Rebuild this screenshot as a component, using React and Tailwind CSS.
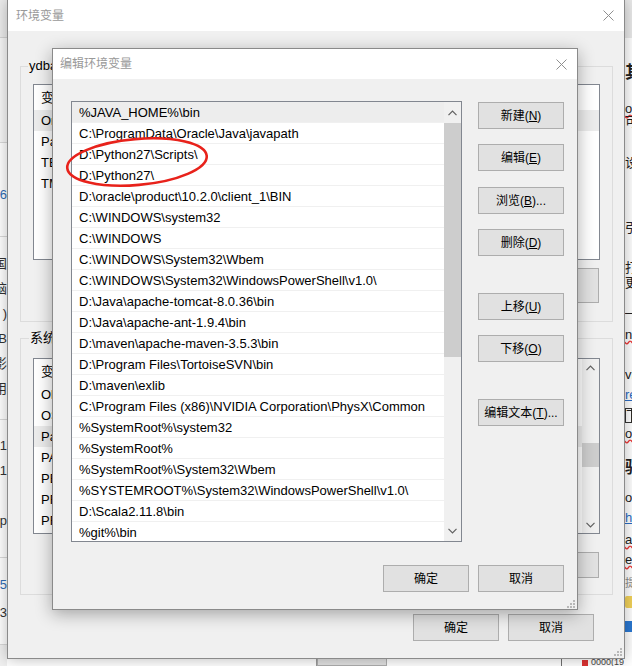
import React from 'react';

const pathList = [
  '%JAVA_HOME%\\bin',
  'C:\\ProgramData\\Oracle\\Java\\javapath',
  'D:\\Python27\\Scripts\\',
  'D:\\Python27\\',
  'D:\\oracle\\product\\10.2.0\\client_1\\BIN',
  'C:\\WINDOWS\\system32',
  'C:\\WINDOWS',
  'C:\\WINDOWS\\System32\\Wbem',
  'C:\\WINDOWS\\System32\\WindowsPowerShell\\v1.0\\',
  'D:\\Java\\apache-tomcat-8.0.36\\bin',
  'D:\\Java\\apache-ant-1.9.4\\bin',
  'D:\\maven\\apache-maven-3.5.3\\bin',
  'D:\\Program Files\\TortoiseSVN\\bin',
  'D:\\maven\\exlib',
  'C:\\Program Files (x86)\\NVIDIA Corporation\\PhysX\\Common',
  '%SystemRoot%\\system32',
  '%SystemRoot%',
  '%SystemRoot%\\System32\\Wbem',
  '%SYSTEMROOT%\\System32\\WindowsPowerShell\\v1.0\\',
  'D:\\Scala2.11.8\\bin',
  '%git%\\bin',
];

const userVars = ['OneDrive', 'Path', 'TEMP', 'TMP'];
const sysVars = ['OlapPath', 'OS', 'Path', 'PATHEXT', 'PERL5LIB', 'PROCESSOR_ARCHITECTURE', 'PROCESSOR_IDENTIFIER'];

const CloseX = () => (
  <svg width="11" height="11" viewBox="0 0 11 11">
    <path d="M0.5 0.5L10.5 10.5M10.5 0.5L0.5 10.5" stroke="#8f8f8f" strokeWidth="1" />
  </svg>
);

const Chevron = ({ down }) => (
  <svg width="9" height="6" viewBox="0 0 9 6">
    <path
      d={down ? 'M0.5 0.8L4.5 4.8L8.5 0.8' : 'M0.5 5.2L4.5 1.2L8.5 5.2'}
      stroke="#606060"
      strokeWidth="1.2"
      fill="none"
    />
  </svg>
);

const Grip = () => (
  <svg width="10" height="10" viewBox="0 0 10 10" fill="#b8b8b8">
    <rect x="8" y="2" width="2" height="2" />
    <rect x="5" y="5" width="2" height="2" />
    <rect x="8" y="5" width="2" height="2" />
    <rect x="2" y="8" width="2" height="2" />
    <rect x="5" y="8" width="2" height="2" />
    <rect x="8" y="8" width="2" height="2" />
  </svg>
);

const WinButton = ({ children, className = '' }) => (
  <button
    className={`flex w-[86px] shrink-0 items-center justify-center border border-[#adadad] bg-[#e1e1e1] text-[12px] text-black ${className}`}
  >
    {children}
  </button>
);

// outer window list (user / system variables)
const VarList = ({ names, selected, scroll }) => (
  <div className="flex h-[176px] border border-[#828790] bg-white">
    <div className="flex min-w-0 flex-1 flex-col overflow-hidden text-[13px] text-black">
      <div className="flex h-[25px] shrink-0 items-center">
        <div className="w-[200px] border-r border-[#e5e5e5] px-[7px] leading-[25px]">变量</div>
        <div className="px-[7px]">值</div>
      </div>
      {names.map((n, i) => (
        <div
          key={n + i}
          className={`flex h-[21px] shrink-0 items-center whitespace-nowrap px-[7px] ${i === selected ? 'bg-[#ececec]' : ''}`}
        >
          {n}
        </div>
      ))}
    </div>
    {scroll && (
      <div className="flex w-[17px] shrink-0 flex-col bg-[#f0f0f0]">
        <div className="flex h-[17px] items-center justify-center">
          <Chevron />
        </div>
        <div className="mt-[67px] h-[24px] bg-[#cdcdcd]" />
        <div className="flex-1" />
        <div className="flex h-[17px] items-center justify-center">
          <Chevron down />
        </div>
      </div>
    )}
  </div>
);

function BackgroundPage() {
  return (
    <div className="flex h-full w-full">
      {/* left sliver of the web page */}
      <div className="flex w-[7px] shrink-0 flex-col overflow-hidden text-[13px] leading-none text-[#333]">
        <div className="h-[38px] shrink-0 border-b border-[#d4d4d4] bg-[#ececec]" />
        <div className="h-[105px] shrink-0 border-b border-[#dadada] bg-[#f7f7f7]" />
        <div className="flex h-[94px] shrink-0 flex-col items-end border-b border-[#dadada] pt-[45px] text-[#2f6db5]">
          <span>6</span>
        </div>
        <div className="flex h-[183px] shrink-0 flex-col items-end border-b border-[#dadada] pt-[14px] leading-[25px]">
          <span className="whitespace-nowrap">中国</span>
          <span className="whitespace-nowrap">电脑</span>
          <span>)</span>
          <span>B</span>
          <span className="whitespace-nowrap">摄影</span>
          <span className="whitespace-nowrap">使用</span>
        </div>
        <div className="flex h-[138px] shrink-0 flex-col items-end border-b border-[#dadada] pt-[13px] leading-[25px]">
          <span>1</span>
          <span>1</span>
          <span>&nbsp;</span>
          <span>pp</span>
        </div>
        <div className="flex h-[87px] shrink-0 flex-col items-end border-b border-[#dadada] pt-[13px] leading-[28px]">
          <span className="text-[#2f6db5]">5</span>
          <span>93</span>
        </div>
        <div className="flex-1 bg-[#f0f0f0]" />
      </div>

      {/* middle: only the bottom edge shows */}
      <div className="flex min-w-0 flex-1 flex-col justify-end overflow-hidden">
        <div className="flex h-[8px] items-stretch">
          <div className="ml-[309px] w-[1px] bg-[#9a9a9a]" />
          <div className="w-[75px] border border-[#adadad] bg-[#e1e1e1]" />
          <div className="ml-[174px] w-[1px] bg-[#707070]" />
          <div className="ml-[20px] mt-[2px] h-[6px] w-[6px] bg-[#d33]" />
          <span className="ml-[3px] whitespace-nowrap text-[9px] leading-[8px] text-[#444]">0000(19</span>
        </div>
      </div>

      {/* right sliver of the web page */}
      <div className="flex w-[8px] shrink-0 flex-col overflow-hidden bg-white pl-[1px] text-[13px] leading-none text-[#222]">
        <div className="h-[38px] shrink-0 bg-[#e9e9e9]" />
        <div className="mt-[26px] h-[18px] shrink-0 whitespace-nowrap text-[17px] font-bold">其他</div>
        <div className="mt-[20px] h-[13px] shrink-0 whitespace-nowrap underline decoration-[#e33] decoration-wavy">o</div>
        <div className="h-[14px] shrink-0 whitespace-nowrap">可以</div>
        <div className="mt-[27px] h-[14px] shrink-0 whitespace-nowrap">设置</div>
        <div className="mt-[51px] h-[14px] shrink-0 whitespace-nowrap">引用</div>
        <div className="mt-[26px] h-[14px] shrink-0 whitespace-nowrap">打开</div>
        <div className="mt-[1px] h-[14px] shrink-0 whitespace-nowrap">更改</div>
        <div className="mt-[16px] h-[14px] shrink-0 whitespace-nowrap">——</div>
        <div className="mt-[8px] h-[14px] shrink-0 whitespace-nowrap underline decoration-[#e33] decoration-wavy">n</div>
        <div className="mt-[26px] h-[14px] shrink-0 whitespace-nowrap">vi</div>
        <div className="mt-[6px] h-[14px] shrink-0 whitespace-nowrap text-[#2b6cc4] underline">re</div>
        <div className="mt-[6px] h-[15px] shrink-0 whitespace-nowrap border border-[#333]">下</div>
        <div className="mt-[4px] h-[14px] shrink-0 whitespace-nowrap underline decoration-[#e33] decoration-wavy">o于</div>
        <div className="mt-[18px] h-[18px] shrink-0 whitespace-nowrap text-[17px] font-bold">驱动</div>
        <div className="mt-[14px] h-[14px] shrink-0 whitespace-nowrap">o1</div>
        <div className="mt-[6px] h-[14px] shrink-0 whitespace-nowrap text-[#2b6cc4] underline">h</div>
        <div className="mt-[8px] h-[14px] shrink-0 whitespace-nowrap underline decoration-[#e33] decoration-wavy">a</div>
        <div className="mt-[6px] h-[14px] shrink-0 whitespace-nowrap underline decoration-[#e33] decoration-wavy">es</div>
        <div className="mt-[11px] h-[12px] shrink-0 whitespace-nowrap text-[11px] text-[#888]">提</div>
        <div className="mt-[6px] h-[12px] w-[10px] shrink-0 rounded-[2px] bg-[#f2d25a]" />
        <div className="mt-[13px] h-[11px] shrink-0 bg-[#2a78d2]" />
        <div className="flex-1" />
      </div>
    </div>
  );
}

function EnvDialog() {
  return (
    <div className="absolute left-[7px] top-0 flex h-[659px] w-[618px] flex-col border-x border-b border-[#8a8a8a] bg-[#f0f0f0] shadow-[0_0_14px_rgba(0,0,0,0.28)]">
      <div className="flex h-[31px] shrink-0 items-center justify-between bg-white pl-[8px] pr-[10px]">
        <span className="text-[12px] text-[#999]">环境变量</span>
        <CloseX />
      </div>
      <div className="flex flex-1 flex-col pl-[12px] pr-[11px]">
        <div className="mt-[35px] border border-[#dcdcdc] px-[12px] pb-[18px]">
          <div className="-ml-[5px] -mt-[9px] w-fit bg-[#f0f0f0] px-[1px] text-[13px] leading-[16px] text-black">
            ydba 的用户变量(<u>U</u>)
          </div>
          <div className="mt-[10px]">
            <VarList names={userVars} selected={0} />
          </div>
          <div className="mt-[8px] flex justify-end gap-[9px] pr-[1px]">
            <WinButton className="h-[35px]">新建(<u>N</u>)...</WinButton>
            <WinButton className="h-[35px]">编辑(<u>E</u>)...</WinButton>
            <WinButton className="h-[35px]">删除(<u>D</u>)</WinButton>
          </div>
        </div>

        <div className="mt-[16px] border border-[#dcdcdc] px-[12px] pb-[16px]">
          <div className="-ml-[4px] -mt-[9px] w-fit bg-[#f0f0f0] px-[1px] text-[13px] leading-[16px] text-black">
            系统变量(<u>S</u>)
          </div>
          <div className="mt-[12px]">
            <VarList names={sysVars} selected={2} scroll />
          </div>
          <div className="mt-[18px] flex justify-end gap-[9px] pr-[1px]">
            <WinButton className="h-[26px]">新建(<u>W</u>)...</WinButton>
            <WinButton className="h-[26px]">编辑(<u>I</u>)...</WinButton>
            <WinButton className="h-[26px]">删除(<u>L</u>)</WinButton>
          </div>
        </div>

        <div className="mr-[19px] mt-[19px] flex justify-end gap-[9px]">
          <WinButton className="h-[27px]">确定</WinButton>
          <WinButton className="h-[27px]">取消</WinButton>
        </div>
      </div>
      <div className="absolute bottom-[2px] right-[2px]">
        <Grip />
      </div>
    </div>
  );
}

function EditDialog() {
  return (
    <div className="absolute left-[52px] top-[48px] flex h-[562px] w-[526px] flex-col border border-[#8a8a8a] bg-[#f0f0f0] shadow-[0_4px_16px_rgba(0,0,0,0.32)]">
      <div className="flex h-[30px] shrink-0 items-center justify-between bg-white pl-[7px] pr-[10px]">
        <span className="text-[12px] text-[#999]">编辑环境变量</span>
        <CloseX />
      </div>

      <div className="mt-[22px] flex">
        {/* path list */}
        <div className="ml-[18px] flex h-[441px] w-[391px] border border-[#828790] bg-white">
          <div className="flex min-w-0 flex-1 flex-col overflow-hidden text-[13px] text-black">
            {pathList.map((p, i) => (
              <div
                key={p}
                className={`flex h-[21px] shrink-0 items-center whitespace-nowrap border-b border-[#f0f0f0] pl-[7px] pt-[1px] ${i === 0 ? 'bg-[#ededed]' : ''}`}
              >
                {p}
              </div>
            ))}
          </div>
          <div className="flex w-[17px] shrink-0 flex-col bg-[#f0f0f0]">
            <div className="flex h-[21px] items-center justify-center">
              <Chevron />
            </div>
            <div className="h-[234px] bg-[#cdcdcd]" />
            <div className="flex-1" />
            <div className="flex h-[21px] items-center justify-center">
              <Chevron down />
            </div>
          </div>
        </div>

        {/* side buttons */}
        <div className="ml-[16px] flex flex-col pt-[1px]">
          <WinButton className="h-[27px]">新建(<u>N</u>)</WinButton>
          <WinButton className="mt-[15px] h-[27px]">编辑(<u>E</u>)</WinButton>
          <WinButton className="mt-[16px] h-[27px]">浏览(<u>B</u>)...</WinButton>
          <WinButton className="mt-[15px] h-[27px]">删除(<u>D</u>)</WinButton>
          <WinButton className="mt-[37px] h-[27px]">上移(<u>U</u>)</WinButton>
          <WinButton className="mt-[15px] h-[27px]">下移(<u>O</u>)</WinButton>
          <WinButton className="mt-[37px] h-[27px]">编辑文本(<u>T</u>)...</WinButton>
        </div>
      </div>

      <div className="mt-[23px] flex justify-end gap-[9px] pr-[13px]">
        <WinButton className="h-[27px]">确定</WinButton>
        <WinButton className="h-[27px]">取消</WinButton>
      </div>

      <div className="absolute bottom-[1px] right-[2px]">
        <Grip />
      </div>
    </div>
  );
}

export default function App() {
  return (
    <div className="relative h-[666px] w-[632px] overflow-hidden bg-white font-['Liberation_Sans','Noto_Sans_CJK_SC',sans-serif]">
      <BackgroundPage />
      <EnvDialog />
      <EditDialog />
      {/* red hand-drawn annotation */}
      <svg className="pointer-events-none absolute left-[60px] top-[131px]" width="160" height="62" viewBox="0 0 160 62">
        <ellipse
          cx="77"
          cy="31"
          rx="70"
          ry="23"
          transform="rotate(-5 77 31)"
          fill="none"
          stroke="#e8221b"
          strokeWidth="2.6"
        />
      </svg>
    </div>
  );
}
